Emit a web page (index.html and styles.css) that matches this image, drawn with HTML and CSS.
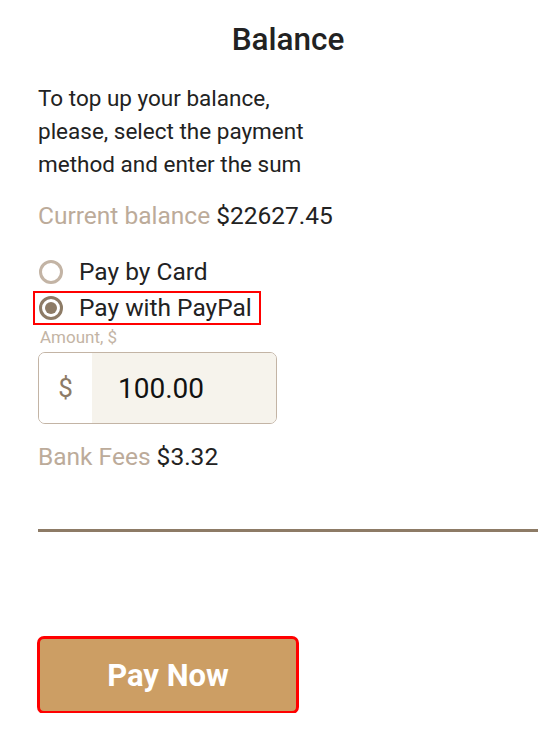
FILE: index.html
```html
<!DOCTYPE html>
<html lang="en">
<head>
<meta charset="utf-8">
<title>Balance</title>
<link rel="stylesheet" href="styles.css">
</head>
<body>
<main class="panel">
  <h1 class="title">Balance</h1>
  <p class="intro">To top up your balance, please, select the payment method and enter the sum</p>
  <p class="balance"><span class="muted">Current balance</span> $22627.45</p>
  <div class="methods">
    <label class="method">
      <span class="radio"></span>
      <span class="method-text">Pay by Card</span>
    </label>
    <label class="method method-selected">
      <span class="radio radio-checked"></span>
      <span class="method-text">Pay with PayPal</span>
    </label>
  </div>
  <div class="field-label">Amount, $</div>
  <div class="amount">
    <div class="amount-prefix">$</div>
    <div class="amount-value">100.00</div>
  </div>
  <p class="fees"><span class="muted">Bank Fees</span> $3.32</p>
  <hr class="divider">
  <button class="pay" type="button">Pay Now</button>
</main>
</body>
</html>
```

FILE: styles.css
```css
html, body {
  margin: 0;
  padding: 0;
  background: #ffffff;
}

body {
  font-family: Roboto, "Liberation Sans", sans-serif;
  color: #222222;
}

.panel {
  padding-left: 38px;
  display: flex;
  flex-direction: column;
  align-items: flex-start;
}

.title {
  align-self: stretch;
  text-align: center;
  margin: 22px 0 0 0;
  font-size: 31.5px;
  line-height: 36px;
  font-weight: 500;
  color: #222222;
}

.intro {
  margin: 24px 0 0 0;
  width: 300px;
  font-size: 22.5px;
  line-height: 33px;
}

.balance {
  margin: 20px 0 0 0;
  font-size: 24.5px;
  line-height: 30px;
}

.muted {
  color: #bcab9a;
}

.methods {
  margin-top: 24px;
  margin-left: -5px;
  display: flex;
  flex-direction: column;
  gap: 2px;
}

.method {
  display: inline-flex;
  align-items: center;
  gap: 16px;
  padding: 1px 7px 1px 4px;
  border: 2px solid transparent;
  font-size: 24.5px;
  line-height: 28px;
}

.method-selected {
  border-color: #ff0000;
}

.radio {
  box-sizing: border-box;
  width: 24px;
  height: 24px;
  border-radius: 50%;
  border: 3px solid #c3b4a5;
  background: #ffffff;
  position: relative;
}

.radio-checked {
  border-color: #8d7b66;
}

.radio-checked::after {
  content: "";
  position: absolute;
  left: 3px;
  top: 3px;
  width: 12px;
  height: 12px;
  border-radius: 50%;
  background: #8d7b66;
}

.field-label {
  margin-top: 2px;
  margin-left: 2px;
  font-size: 17px;
  line-height: 20px;
  color: #c3b4a5;
}

.amount {
  margin-top: 5px;
  display: flex;
  width: 239px;
  height: 72px;
  box-sizing: border-box;
  border: 1px solid #c3b4a5;
  border-radius: 7px;
  overflow: hidden;
}

.amount-prefix {
  width: 53px;
  display: flex;
  align-items: center;
  justify-content: center;
  font-size: 26px;
  color: #8d7b66;
  background: #ffffff;
}

.amount-value {
  flex: 1;
  display: flex;
  align-items: center;
  padding-left: 26px;
  background: #f6f3ec;
  font-size: 28px;
  color: #111111;
}

.fees {
  margin: 18px 0 0 0;
  font-size: 24.5px;
  line-height: 30px;
}

.divider {
  align-self: stretch;
  margin: 57px 0 0 0;
  border: 0;
  height: 3px;
  background: #8d7b66;
}

.pay {
  margin-top: 105px;
  width: 260px;
  height: 76px;
  box-sizing: border-box;
  border: 0;
  border-radius: 6px;
  background: #cc9e64;
  color: #ffffff;
  font-family: Roboto, "Liberation Sans", sans-serif;
  font-size: 31px;
  font-weight: 700;
  outline: 3px solid #ff0000;
  outline-offset: -2px;
  padding: 0;
}
```
